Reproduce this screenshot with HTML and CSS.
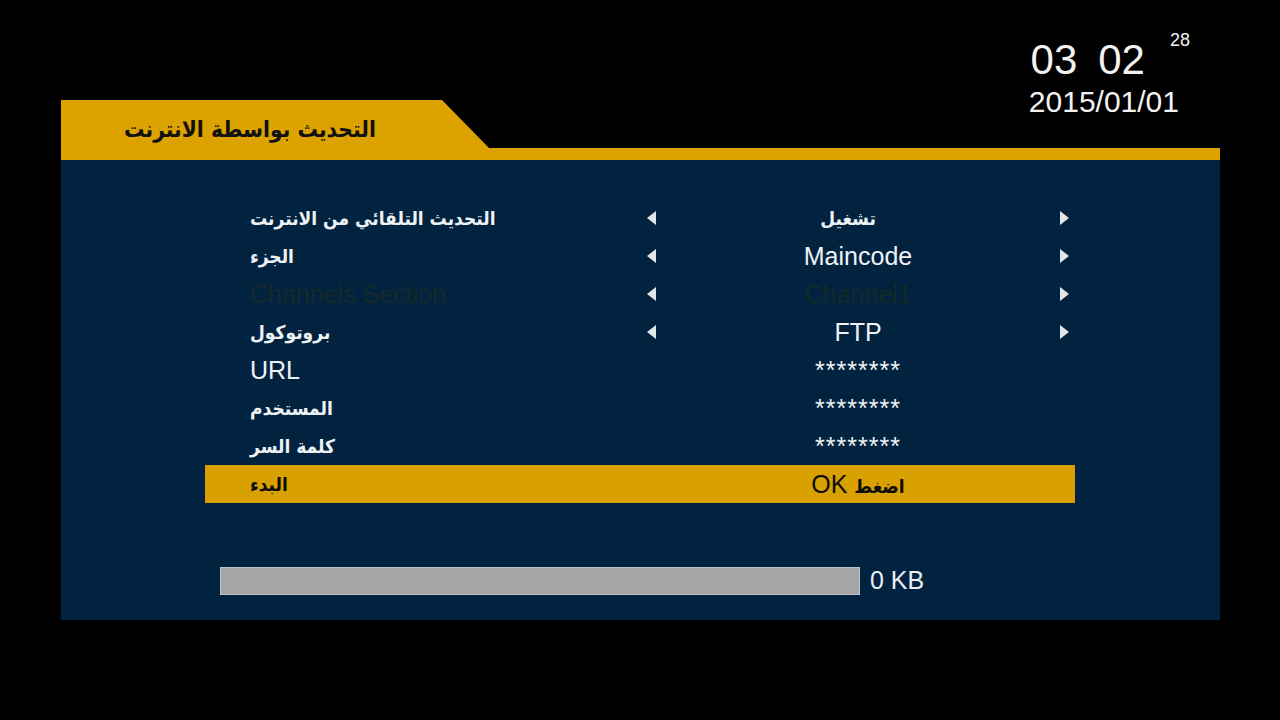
FILE: index.html
```html
<!DOCTYPE html>
<html lang="ar">
<head>
<meta charset="utf-8">
<title>التحديث بواسطة الانترنت</title>
<link rel="stylesheet" href="styles.css">
</head>
<body>
<div class="screen">
  <div class="top">
    <div class="tab"><span class="tab-title">التحديث بواسطة الانترنت</span></div>
    <div class="clock">
      <div class="time"><span class="hh">03</span><span class="mm">02</span><span class="ss">28</span></div>
      <div class="date">2015/01/01</div>
    </div>
  </div>
  <div class="strip"></div>
  <div class="panel">
    <div class="menu">
      <div class="row">
        <span class="label ar">التحديث التلقائي من الانترنت</span>
        <span class="arrow left"></span>
        <span class="value ar">تشغيل</span>
        <span class="arrow right"></span>
      </div>
      <div class="row">
        <span class="label ar">الجزء</span>
        <span class="arrow left"></span>
        <span class="value">Maincode</span>
        <span class="arrow right"></span>
      </div>
      <div class="row disabled">
        <span class="label">Channels Section</span>
        <span class="arrow left"></span>
        <span class="value">Channel1</span>
        <span class="arrow right"></span>
      </div>
      <div class="row">
        <span class="label ar">بروتوكول</span>
        <span class="arrow left"></span>
        <span class="value">FTP</span>
        <span class="arrow right"></span>
      </div>
      <div class="row">
        <span class="label">URL</span>
        <span class="arrow none"></span>
        <span class="value stars">********</span>
        <span class="arrow none"></span>
      </div>
      <div class="row">
        <span class="label ar">المستخدم</span>
        <span class="arrow none"></span>
        <span class="value stars">********</span>
        <span class="arrow none"></span>
      </div>
      <div class="row">
        <span class="label ar">كلمة السر</span>
        <span class="arrow none"></span>
        <span class="value stars">********</span>
        <span class="arrow none"></span>
      </div>
      <div class="row selected">
        <span class="label ar">البدء</span>
        <span class="arrow none"></span>
        <span class="value mixed" dir="rtl"><span class="ar">اضغط</span> OK</span>
        <span class="arrow none"></span>
      </div>
    </div>
    <div class="progress">
      <div class="bar"></div>
      <span class="size">0 KB</span>
    </div>
  </div>
</div>
</body>
</html>
```
FILE: styles.css
```css
html, body {
  margin: 0;
  padding: 0;
  background: #000;
}
body {
  font-family: "Liberation Sans", Arial, sans-serif;
  color: #eef2f4;
}
.screen {
  width: 1280px;
  height: 720px;
  background: #000;
  display: flex;
  flex-direction: column;
  overflow: hidden;
}
.top {
  height: 148px;
  display: flex;
  align-items: flex-end;
  justify-content: space-between;
}
.tab {
  margin-left: 61px;
  width: 428px;
  height: 48px;
  background: #dba200;
  clip-path: polygon(0 0, 381px 0, 428px 100%, 0 100%);
  display: flex;
  align-items: center;
  box-sizing: border-box;
  padding-left: 63px;
  padding-top: 10px;
}
.tab-title {
  font-family: "DejaVu Sans Condensed", "DejaVu Sans", sans-serif;
  font-weight: bold;
  font-size: 22.6px;
  color: #111;
}
.clock {
  display: flex;
  flex-direction: column;
  align-items: flex-end;
  margin-right: 101px;
  margin-bottom: 29px;
  color: #f2f2f2;
}
.time {
  display: flex;
  align-items: flex-start;
  margin-right: -11px;
  height: 44px;
}
.hh, .mm {
  font-size: 42px;
  line-height: 46px;
}
.mm {
  margin-left: 21px;
}
.ss {
  font-size: 18px;
  line-height: 18px;
  margin-left: 25px;
  margin-top: -6px;
}
.date {
  font-size: 30px;
  line-height: 34px;
  margin-top: 4px;
}
.strip {
  margin-left: 61px;
  width: 1159px;
  height: 12px;
  background: #dba200;
}
.panel {
  margin-left: 61px;
  width: 1159px;
  height: 460px;
  background: #022340;
  box-sizing: border-box;
  padding-top: 39px;
  padding-left: 144px;
}
.menu {
  width: 870px;
  display: flex;
  flex-direction: column;
}
.row {
  height: 38px;
  display: grid;
  grid-template-columns: 396px 10px 404px 8px;
  align-items: center;
  padding-left: 45px;
  font-size: 25px;
  color: #eef2f4;
}
.ar {
  font-family: "DejaVu Sans Condensed", "DejaVu Sans", sans-serif;
  font-weight: bold;
  font-size: 19px;
}
.label {
  white-space: nowrap;
}
.value {
  text-align: center;
  white-space: nowrap;
}
.value.ar {
  padding-right: 20px;
}
.value.mixed {
  font-size: 25px;
}
.stars {
  font-size: 25px;
  letter-spacing: 1px;
}
.arrow {
  width: 0;
  height: 0;
  justify-self: center;
}
.arrow.left {
  border-top: 7px solid transparent;
  border-bottom: 7px solid transparent;
  border-right: 9px solid #e2e6e8;
}
.arrow.right {
  border-top: 7px solid transparent;
  border-bottom: 7px solid transparent;
  border-left: 9px solid #e2e6e8;
}
.row.disabled {
  color: #152a28;
}
.row.selected {
  background: #d9a100;
  color: #0c0c0c;
}
.progress {
  margin-top: 63px;
  margin-left: 15px;
  display: flex;
  align-items: center;
  gap: 10px;
}
.bar {
  width: 638px;
  height: 26px;
  background: #a6a6a6;
  border: 1px solid #b9c4cc;
}
.size {
  font-size: 25px;
  color: #e8eef2;
}
```
